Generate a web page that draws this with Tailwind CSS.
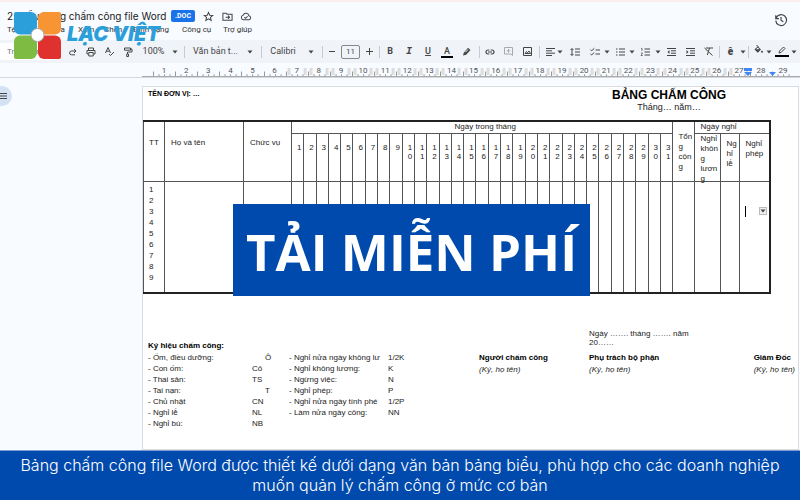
<!DOCTYPE html>
<html lang="vi">
<head>
<meta charset="utf-8">
<title>Mẫu bảng chấm công file Word</title>
<script src="https://cdn.jsdelivr.net/npm/@tailwindcss/browser@4"></script>
</head>
<body class="relative flex min-h-screen flex-col overflow-x-hidden bg-[#f8fbff] font-['Liberation_Sans',Arial,sans-serif] text-[8px] text-[#222]">

<svg class="hidden" aria-hidden="true">
  <symbol id="caret" viewBox="0 0 6 4"><path d="M0.5 0.5h5L3 3.5z" fill="#444"/></symbol>
</svg>

<header class="border-t-2 border-[#fdeeee] pt-1 font-[Roboto,sans-serif]">
  <div class="flex h-[34px] items-start justify-between pl-[7px] pr-3">
    <div>
      <div class="flex h-5 items-center">
        <h1 class="w-[157px] whitespace-nowrap font-[Inter,sans-serif] text-[10px] text-[#222]">2. Mẫu bảng chấm công file Word</h1>
        <span class="ml-[7px] flex h-3 w-6 items-center justify-center rounded-xs bg-[#1a73e8] text-[7px] font-bold text-white">.DOC</span>
        <button aria-label="Gắn dấu sao" class="ml-2 flex w-[11px]"><svg class="size-[11px]" viewBox="0 0 24 24" fill="none" stroke="#444" stroke-width="2.2"><path d="M12 3l2.700 6.100 6.600.6-5 4.400 1.500 6.500L12 17.200 6.200 20.600l1.500-6.500-5-4.400 6.600-.6z"/></svg></button>
        <button aria-label="Di chuyển" class="ml-2 flex w-[11px]"><svg class="size-[11px]" viewBox="0 0 24 24" fill="none" stroke="#444" stroke-width="2.2"><path d="M2 5h7l2 2h11v13H2zM8 13.500h8M13 10l3.500 3.500L13 17"/></svg></button>
        <button aria-label="Trạng thái tài liệu" class="ml-[7px] flex w-3"><svg class="h-[11px] w-3" viewBox="0 0 24 24" fill="none" stroke="#444" stroke-width="2.200"><path d="M6.500 19a5 5 0 01-.6-9.900A6.500 6.500 0 0118.300 10.500 4.300 4.300 0 0118.500 19zM8.500 13.500l2.500 2.500 4.500-4.500"/></svg></button>
      </div>
      <nav class="flex h-2 items-center whitespace-nowrap text-[8px] text-[#333]">
        <a href="#" class="w-[22px]">Tệp</a><a href="#" class="w-[49px]">Chỉnh sửa</a><a href="#" class="w-[26px]">Xem</a><a href="#" class="w-[29px]">Chèn</a><a href="#" class="w-[49px]">Định dạng</a><a href="#" class="w-[41px]">Công cụ</a><a href="#">Trợ giúp</a>
      </nav>
    </div>
    <button aria-label="Lịch sử phiên bản" class="mt-[7px] flex"><svg class="size-[14px]" viewBox="0 0 24 24" fill="none" stroke="#444" stroke-width="2"><path d="M3.500 9A9.300 9.300 0 113 13M3 4v5.500h5.500M12 7v5.500l4 2.500"/></svg></button>
  </div>

  <div class="flex h-[23px] items-center overflow-hidden bg-[#f0f4f9] text-[#444] [&>*]:flex [&>*]:shrink-0 [&>*]:items-center [&>*]:justify-center [&_svg]:overflow-visible">
    <label class="mr-1 h-[17px] w-[60px] rounded-r-full bg-white pl-[7px]"><input aria-label="Trình đơn" placeholder="Trình đơn" class="w-full text-[8px] outline-none placeholder:text-[#777]"></label>
    <button aria-label="Làm lại" class="w-[18px]"><svg class="size-2" viewBox="0 0 8 8" fill="none" stroke="#444"><path d="M7 3H2.500a1.800 1.800 0 000 3.800H6M5 1l2 2-2 2"/></svg></button>
    <button aria-label="In" class="w-[18px]"><svg class="size-[10px]" viewBox="0 0 10 10" fill="none" stroke="#444"><path d="M2.500 3V1h5v2M2.500 7H1V3.500h8V7H7.500M2.800 5.500h4.400V9H2.800z"/></svg></button>
    <button aria-label="Chính tả" class="w-[19px]"><svg class="size-[9px]" viewBox="0 0 9 9" fill="none" stroke="#444"><path d="M.5 6L3 .5 5.500 6M1.500 4.200h3M4 7l1.500 1.500L9 5"/></svg></button>
    <button aria-label="Sao chép định dạng" class="w-[18px]"><svg class="size-[10px]" viewBox="0 0 10 10" fill="none" stroke="#444"><path d="M1.500 1h6v2.200h-6zM7.500 2H9v3H4.500v2M3.700 7h1.800v2.500H3.700z"/></svg></button>
    <button class="w-[33px] text-[9px]">100%</button>
    <span class="w-[10px]"><svg class="h-1 w-[6px]"><use href="#caret"/></svg></span>
    <i class="w-2"><b class="h-3 w-px bg-[#c7cbd1]"></b></i>
    <button class="w-[55px] text-[9px] whitespace-nowrap">Văn bản t...</button>
    <span class="w-[14px]"><svg class="h-1 w-[6px]"><use href="#caret"/></svg></span>
    <i class="w-2"><b class="h-3 w-px bg-[#c7cbd1]"></b></i>
    <button class="w-9 text-[9px]">Calibri</button>
    <span class="w-5"><svg class="h-1 w-[6px]"><use href="#caret"/></svg></span>
    <i class="w-[2px]"><b class="h-3 w-px bg-[#c7cbd1]"></b></i>
    <button aria-label="Giảm cỡ chữ" class="w-[18px]"><b class="h-px w-[6px] bg-[#444]"></b></button>
    <input aria-label="Cỡ chữ" value="11" class="h-[14px] w-[19px] rounded-xs border border-[#888] text-center text-[8px]">
    <button aria-label="Tăng cỡ chữ" class="w-[18px]"><svg class="size-[7px]" viewBox="0 0 7 7" stroke="#444"><path d="M0 3.500h7M3.500 0v7"/></svg></button>
    <i class="w-[2px]"><b class="h-3 w-px bg-[#c7cbd1]"></b></i>
    <button class="w-5 text-[9px] font-bold">B</button>
    <button class="w-[18px] font-['Liberation_Mono',monospace] text-[10px] font-bold italic">I</button>
    <button class="w-5 text-[9px] font-medium underline">U</button>
    <button class="w-[18px]"><span class="w-3 border-b-2 border-black text-center text-[9px] leading-[10px] font-medium">A</span></button>
    <button aria-label="Đánh dấu" class="w-[21px]"><svg class="size-[9px]" viewBox="0 0 9 9"><path d="M1 8.500l.8-2.800L6 .8 8.500 3 4.200 7.700z" fill="#444"/><path d="M3.500 5.200L6 2.500" stroke="#f0f4f9"/></svg></button>
    <i class="w-1"><b class="h-3 w-px bg-[#c7cbd1]"></b></i>
    <button aria-label="Liên kết" class="w-[17px]"><svg class="h-[6px] w-[10px]" viewBox="0 0 10 6" fill="none" stroke="#444" stroke-width="1.200"><path d="M4.300 1H3a2 2 0 000 4h1.300M5.700 1H7a2 2 0 010 4H5.700M3 3h4"/></svg></button>
    <button aria-label="Nhận xét" class="w-[21px]"><svg class="size-[9px]" viewBox="0 0 9 9" fill="none" stroke="#aaa"><path d="M.5.5h8v8L7 7H.5zM4.500 2v3.600M2.700 3.800h3.600"/></svg></button>
    <button aria-label="Hình ảnh" class="w-4"><svg class="size-[9px]" viewBox="0 0 9 9" fill="none" stroke="#444"><path d="M.5.5h8v8h-8zM2 6.500l1.500-2 1 1.200L6 4l1.500 2.500z"/></svg></button>
    <i class="w-2"><b class="h-3 w-px bg-[#c7cbd1]"></b></i>
    <button aria-label="Căn lề" class="w-[14px]"><svg class="h-2 w-[9px]" viewBox="0 0 9 8" stroke="#444"><path d="M0 .5h9M0 2.800h6M0 5.200h9M0 7.500h6"/></svg></button>
    <span class="w-[6px]"><svg class="h-1 w-[6px]"><use href="#caret"/></svg></span>
    <button aria-label="Giãn dòng" class="w-6"><svg class="h-2 w-[10px]" viewBox="0 0 10 8" fill="none" stroke="#444"><path d="M5 1h5M5 4h5M5 7h5M2 .8v6.400M.5 2L2 .5 3.500 2M.5 6L2 7.500 3.500 6"/></svg></button>
    <button aria-label="Danh sách kiểm tra" class="w-4"><svg class="h-2 w-[10px]" viewBox="0 0 10 8" fill="none" stroke="#444"><path d="M5.500 2H10M5.500 6H10M.3 1.500l1.300 1.300L4.300.3M.3 5.700L1.600 7l2.700-2.500"/></svg></button>
    <span class="w-2"><svg class="h-1 w-[6px]"><use href="#caret"/></svg></span>
    <button aria-label="Dấu đầu dòng" class="w-[18px]"><svg class="h-2 w-[9px]" viewBox="0 0 9 8" stroke="#444"><path d="M3 1h6M3 4h6M3 7h6M0 1h1.500M0 4h1.500M0 7h1.500"/></svg></button>
    <span class="w-[6px]"><svg class="h-1 w-[6px]"><use href="#caret"/></svg></span>
    <button aria-label="Danh sách số" class="w-5"><svg class="h-2 w-[9px]" viewBox="0 0 9 8" fill="none" stroke="#444"><path d="M3.500 1H9M3.500 4H9M3.500 7H9"/><path d="M0 .4h1V3M0 5h1.500L0 7.500h1.800" stroke-width=".7"/></svg></button>
    <span class="w-[6px]"><svg class="h-1 w-[6px]"><use href="#caret"/></svg></span>
    <button aria-label="Giảm thụt lề" class="w-5"><svg class="h-2 w-[9px]" viewBox="0 0 9 8" stroke="#444"><path d="M0 .5h9M4 2.800h5M4 5.200h5M0 7.500h9"/><path d="M2.500 2v4L.5 4z" fill="#444" stroke="none"/></svg></button>
    <button aria-label="Tăng thụt lề" class="w-[18px]"><svg class="h-2 w-[9px]" viewBox="0 0 9 8" stroke="#444"><path d="M0 .5h9M4 2.800h5M4 5.200h5M0 7.500h9"/><path d="M.5 2v4l2-2z" fill="#444" stroke="none"/></svg></button>
    <button aria-label="Xóa định dạng" class="w-[18px]"><svg class="size-[9px]" viewBox="0 0 9 9" fill="none" stroke="#444"><path d="M2 1h7M5.500 1L3.300 8M.5 1l8 7.500"/></svg></button>
    <i class="w-1"><b class="h-3 w-px bg-[#c7cbd1]"></b></i>
    <button class="w-[19px] text-[10px] font-black">ê</button>
    <span class="w-[6px]"><svg class="h-1 w-[6px]"><use href="#caret"/></svg></span>
    <i class="w-1"><b class="h-3 w-px bg-[#c7cbd1]"></b></i>
    <button aria-label="Màu nền" class="w-4 pb-1"><svg class="size-[9px]" viewBox="0 0 9 9"><path d="M.5 4.500L3.800 1.200 7 4.500 3.800 7.700z" fill="#444"/><path d="M2.500 0l1.800 1.800" stroke="#444"/><path d="M2 4.200l1.800-1.700 1.700 1.700z" fill="#f0f4f9"/><circle cx="8" cy="6.700" r="1" fill="#444"/></svg></button>
    <span class="w-[6px]"><svg class="h-1 w-[6px]"><use href="#caret"/></svg></span>
    <button aria-label="Màu viền" class="w-[19px]"><svg class="h-[11px] w-[14px]" viewBox="0 0 14 11" fill="none" stroke="#444"><path d="M4 7l.5-2L8.500 1 10 2.500 6 6.500z"/><path d="M0 10h14" stroke="#000" stroke-width="2"/></svg></button>
    <span class="w-[6px]"><svg class="h-1 w-[6px]"><use href="#caret"/></svg></span>
  </div>

  <div class="border-b border-[#d5d9de] pt-1">
    <div id="ruler" class="relative ml-[142px] flex h-[10px] border-b border-[#aaa] pl-[11px] pr-[6px] text-[8px] leading-[8px] text-[#555]"></div>
  </div>
</header>

<main class="flex grow pt-2">
  <aside class="w-[142px] shrink-0">
    <button aria-label="Hiện dàn ý" class="-ml-2 flex size-5 items-center justify-end rounded-full bg-[#d5e2f6] pr-[5px]"><svg class="h-[6px] w-[7px]" viewBox="0 0 7 6" stroke="#444"><path d="M0 .5h7M0 3h7M0 5.500h7"/></svg></button>
  </aside>
  <article class="mr-px flex-1 border border-[#d9dde2] bg-white pt-[2px] text-[8px]">
    <div class="flex h-[31px] justify-between pl-[5px] pr-[72px]">
      <p class="text-[7px] leading-[9px] font-bold text-black">TÊN ĐƠN VỊ: …</p>
      <div class="text-center"><h2 class="text-[12px] leading-3 font-bold text-black">BẢNG CHẤM CÔNG</h2><p class="text-[9px] leading-3">Tháng… năm…</p></div>
    </div>
    <div class="pr-[27px]">
      <table class="w-full table-fixed border-collapse border-y-2 border-r-2 border-l border-[#222] text-left leading-[10px] [&_td]:border-x [&_td]:border-[#555] [&_th]:border [&_th]:border-[#555] [&_th]:font-normal">
        <colgroup id="cols"><col class="w-[21px]"><col class="w-[79px]"><col class="w-12"><col class="w-[22px]"><col class="w-[26px]"><col class="w-[19px]"><col class="w-[30px]"></colgroup>
        <thead>
          <tr class="h-3">
            <th rowspan="2" class="pb-4 pl-[5px]">TT</th><th rowspan="2" class="pb-4 pl-[6px]">Họ và tên</th><th rowspan="2" class="pb-4 pl-[6px]">Chức vụ</th>
            <th colspan="31" class="pl-[6px] text-center">Ngày trong tháng</th>
            <th rowspan="2" class="pl-[5px] align-top pt-[10px]">Tổn<br>g<br>cộn<br>g</th>
            <th colspan="3" class="pl-[5px]">Ngày nghỉ</th>
          </tr>
          <tr id="days" class="h-12 align-top">
            <th class="pl-[5px]"><div class="h-[46px]">Nghỉ<br>khôn<br>g<br>lươn<br>g</div></th><th class="pt-[5px] pl-[5px]">Ng<br>hỉ<br>lễ</th><th class="pt-[5px] pl-[5px]">Nghỉ<br>phép</th>
          </tr>
        </thead>
        <tbody><tr id="body" class="h-[112px] align-top">
          <td class="pt-[2px] pl-[5px] leading-[11px]">1<br>2<br>3<br>4<br>5<br>6<br>7<br>8<br>9</td><td></td><td></td>
          <td></td><td></td><td></td>
          <td class="pt-6"><div class="flex items-center justify-between pr-[2px] pl-[5px]"><span class="h-[11px] w-px bg-black"></span><button aria-label="Tùy chọn bảng" class="flex size-2 items-center justify-center border border-[#bbb] bg-[#eee]"><svg class="h-1 w-[6px] shrink-0"><use href="#caret"/></svg></button></div></td>
        </tr></tbody>
      </table>
    </div>
    <div class="grid grid-cols-[331px_110px_1fr_auto] pt-[35px] pl-[5px] pr-[3px] pb-5">
      <section class="pt-[11px]">
        <h3 class="leading-3 font-bold text-black">Ký hiệu chấm công:</h3>
        <table class="w-[280px] table-fixed leading-[11px] whitespace-nowrap">
          <colgroup><col class="w-[104px]"><col class="w-[37px]"><col class="w-[99px]"><col></colgroup>
          <tr><td>- Ốm, điều dưỡng:</td><td class="pl-[13px]">Ô</td><td>- Nghỉ nửa ngày không lư</td><td>1/2K</td></tr>
          <tr><td>- Con ốm:</td><td>Cô</td><td>- Nghỉ không lương:</td><td>K</td></tr>
          <tr><td>- Thai sản:</td><td>TS</td><td>- Ngừng việc:</td><td>N</td></tr>
          <tr><td>- Tai nạn:</td><td class="pl-[13px]">T</td><td>- Nghỉ phép:</td><td>P</td></tr>
          <tr><td>- Chủ nhật</td><td>CN</td><td>- Nghỉ nửa ngày tính phé</td><td>1/2P</td></tr>
          <tr><td>- Nghỉ lễ</td><td>NL</td><td>- Làm nửa ngày công:</td><td>NN</td></tr>
          <tr><td>- Nghỉ bù:</td><td>NB</td><td></td><td></td></tr>
        </table>
      </section>
      <section class="pt-[23px] leading-[12px]"><h3 class="font-bold text-black">Người chấm công</h3><p class="italic">(Ký, họ tên)</p></section>
      <section class="leading-[12px]"><p class="h-[23px] w-[110px] leading-[9px]">Ngày ……. tháng ……. năm<br>20……</p><h3 class="font-bold text-black">Phụ trách bộ phận</h3><p class="italic">(Ký, họ tên)</p></section>
      <section class="pt-[23px] leading-[12px]"><h3 class="font-bold text-black">Giám Đốc</h3><p class="italic">(Ký, họ tên)</p></section>
    </div>
  </article>
</main>

<footer class="border-t border-[#7f9fd2] bg-[#004aad] px-4 pt-1 pb-[6px] text-center font-[Inter,sans-serif] text-[16px] leading-5 font-light text-white">
  Bảng chấm công file Word được thiết kế dưới dạng văn bản bảng biểu, phù hợp cho các doanh nghiệp<br>muốn quản lý chấm công ở mức cơ bản
</footer>

<a href="#" class="absolute top-3 left-[14px] flex items-center" aria-label="Lạc Việt">
  <svg class="size-[47px]" viewBox="0 0 47 47"><path d="M2 0h15a6 6 0 016 6v16.500H6a6 6 0 01-6-6V2a2 2 0 012-2z" fill="#2a9fd9"/><path d="M30 0h15a2 2 0 012 2v14.500a6 6 0 01-6 6H24V6a6 6 0 016-6z" fill="#f79433"/><path d="M6 23.500h17V41a6 6 0 01-6 6H2a2 2 0 01-2-2V29.500a6 6 0 016-6z" fill="#7dbb42"/><path d="M24 23.500h17a6 6 0 016 6V45a2 2 0 01-2 2H30a6 6 0 01-6-6z" fill="#df322f"/><circle cx="23.500" cy="23" r="6.500" fill="#fff" stroke="#aaa"/></svg>
  <span class="ml-[6px] pb-1 font-[Inter,sans-serif] text-[20px] leading-5 font-black whitespace-nowrap text-[#2a9fd9] italic">LẠC VIỆT</span>
</a>

<div class="absolute top-[204px] left-[233px] flex h-[92px] w-[357px] items-center justify-center bg-[#004aad] pt-[2px] font-['Open_Sans',sans-serif] text-[51px] font-bold whitespace-nowrap text-white"><a href="#">TẢI MIỄN PHÍ</a></div>

<script>
  // Ruler: one cell per centimetre, with quarter ticks along the base
  const ruler = document.getElementById('ruler');
  for (let n = 1; n <= 29; n++) {
    ruler.insertAdjacentHTML('beforeend', `<div class="relative flex-1 text-center">
      <svg class="absolute inset-0 size-full" viewBox="0 0 22 10" preserveAspectRatio="none" stroke="#999"><path d="M.5 5v5M6 8v2M11.500 8v2M17 8v2"/>${n > 6 && n < 28 ? '<path d="M3 1v8M19 1v8" stroke="#ddd" stroke-width="3"/>' : ''}</svg>
      <span class="relative">${n}</span></div>`);
  }
  ruler.insertAdjacentHTML('beforeend', '<svg class="absolute top-0 right-6 h-[10px] w-8" viewBox="0 0 32 10" fill="#4285f4"><path d="M0 1h8v3H0zM0 5h8L4 9zM25 5h7l-3.500 4z"/></svg>');

  // Day columns 1–31
  const days = document.getElementById('days'), body = document.getElementById('body'), cols = document.getElementById('cols');
  const firstLeave = days.children[0], total = body.children[3], totalCol = cols.children[3];
  for (let d = 1; d <= 31; d++) {
    firstLeave.insertAdjacentHTML('beforebegin', `<th class="pt-[9px] pl-[5px] leading-[9px]">${String(d).split('').join('<br>')}</th>`);
    total.insertAdjacentHTML('beforebegin', '<td></td>');
    totalCol.insertAdjacentHTML('beforebegin', '<col>');
  }
</script>
</body>
</html>
